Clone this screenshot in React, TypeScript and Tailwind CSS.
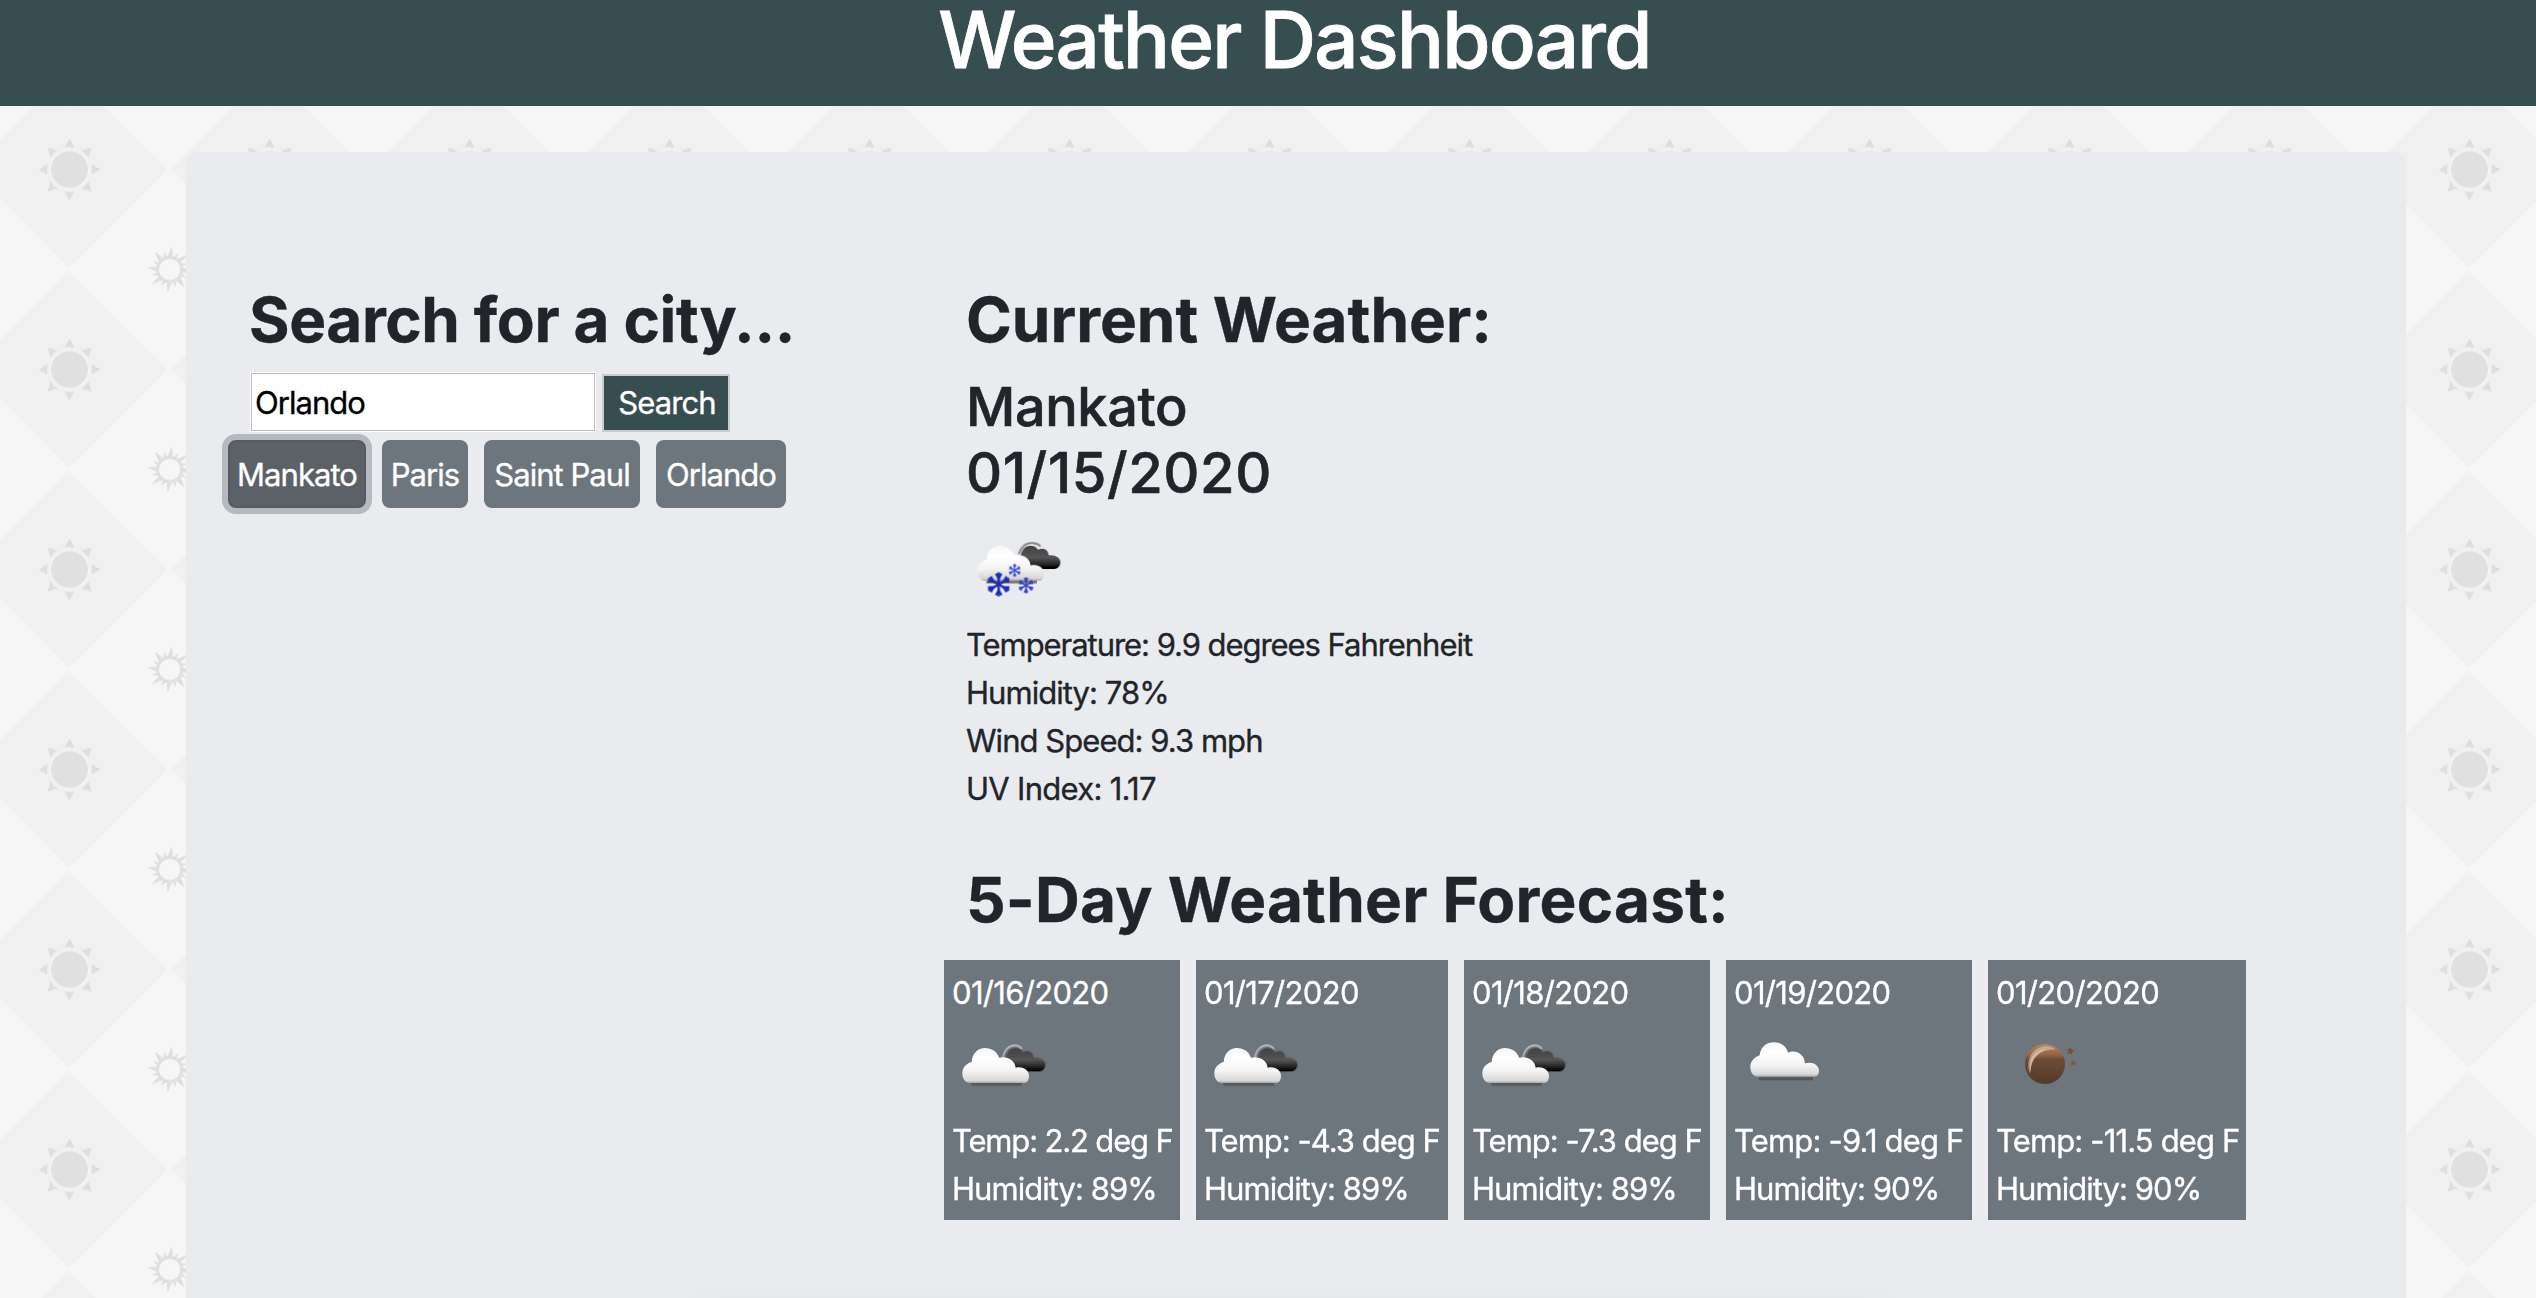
import type { ReactNode } from "react";

type IconKind = "snow" | "broken" | "cloud" | "night";

function PatternBackground() {
  const triangles = [0, 45, 90, 135, 180, 225, 270, 315];
  const corners = [
    [0, 0],
    [200, 0],
    [0, 200],
    [200, 200],
  ];
  return (
    <svg className="absolute inset-0 h-full w-full" aria-hidden="true">
      <defs>
        <g id="ray-sun">
          {triangles.map((a) => (
            <g key={a} transform={`rotate(${a})`}>
              <path d="M-2.6 -12 L-0.4 -17 L1.8 -23 Q3.6 -17 2.2 -12Z" fill="#dedede" />
              <path d="M-2 -12 L1.8 -19 L2 -12Z" fill="#e0e0e0" transform="rotate(22.5)" />
            </g>
          ))}
          <circle r="12" fill="#f6f6f6" stroke="#dfdfdf" strokeWidth="2.8" />
        </g>
        <pattern id="tiles" x="-31" y="69.5" width="200" height="200" patternUnits="userSpaceOnUse">
          <rect width="200" height="200" fill="#f6f6f6" />
          <path d="M100 2 L198.500 100 L100 198.500 L2 100Z" fill="#f0f0f0" />
          <path d="M100 3V197" stroke="#f2f2f2" strokeWidth="2" />
          <g transform="translate(100.500 100)">
            {triangles.map((a) => (
              <path key={a} d="M0 -31 L5 -22 Q0 -23 -5 -22Z" fill="#dedede" transform={`rotate(${a})`} />
            ))}
            <circle r="20" fill="#f3f3f3" />
            <circle r="18.500" fill="#e0e0e0" />
          </g>
          {corners.map(([x, y]) => (
            <use key={`${x}-${y}`} href="#ray-sun" x={x + 0.7} y={y} />
          ))}
        </pattern>
      </defs>
      <rect width="100%" height="100%" fill="url(#tiles)" />
    </svg>
  );
}

function IconGradients() {
  return (
    <svg className="absolute h-0 w-0" aria-hidden="true">
      <defs>
        <linearGradient id="white-cloud" x1="0" y1="0" x2="0" y2="1">
          <stop offset="0" stopColor="#f6f6f6" />
          <stop offset="0.3" stopColor="#ffffff" />
          <stop offset="0.65" stopColor="#f4f4f4" />
          <stop offset="0.93" stopColor="#d8d8d8" />
          <stop offset="1" stopColor="#a8a8a8" />
        </linearGradient>
        <linearGradient id="dark-cloud" x1="0" y1="0" x2="0" y2="1">
          <stop offset="0" stopColor="#414141" />
          <stop offset="0.5" stopColor="#555555" />
          <stop offset="0.75" stopColor="#2a2a2a" />
          <stop offset="0.95" stopColor="#000000" />
        </linearGradient>
        <linearGradient id="planet" x1="0" y1="0" x2="0" y2="1">
          <stop offset="0" stopColor="#b98664" />
          <stop offset="0.28" stopColor="#8f6444" />
          <stop offset="0.38" stopColor="#6d4b35" />
          <stop offset="1" stopColor="#53392a" />
        </linearGradient>
        <filter id="soft" x="-20%" y="-20%" width="140%" height="140%">
          <feGaussianBlur stdDeviation="1.7" />
        </filter>
      </defs>
    </svg>
  );
}

function Flake({ x, y, r, color }: { x: number; y: number; r: number; color: string }) {
  return (
    <g transform={`translate(${x} ${y})`} stroke={color} strokeWidth={r * 0.2} fill="none">
      {[0, 60, 120, 180, 240, 300].map((a) => (
        <g key={a} transform={`rotate(${a})`}>
          <path d={`M0 0V${-r}`} />
          <path d={`M${-r * 0.22} ${-r * 0.9}L0 ${-r * 0.5}L${r * 0.22} ${-r * 0.9}`} />
        </g>
      ))}
    </g>
  );
}

function CloudPair() {
  return (
    <g filter="url(#soft)">
      <path d="M159 80 C160 52 178 38 197 39 C206 40 212 44 216 50" fill="none" stroke="#c9c9c9" strokeWidth="4" />
      <path
        d="M170 118 C164 98 164 76 172 62 C182 42 210 44 219 59 C236 51 250 60 251 76 C272 74 287 84 286 98 C285 110 276 117 264 117Z"
        fill="url(#dark-cloud)"
      />
      <path d="M64 156H216" stroke="#55524f" strokeWidth="8" opacity="0.75" />
      <path
        d="M58 152 C42 150 36 134 37 120 C38 104 50 93 65 89 C67 62 84 47 104 47 C126 47 143 60 147 76 C168 70 195 82 197 106 C220 101 237 114 237 130 C237 143 232 152 222 152Z"
        fill="url(#white-cloud)"
      />
    </g>
  );
}

function WeatherIcon({ kind }: { kind: IconKind }) {
  const art: Record<IconKind, ReactNode> = {
    broken: (
      <g transform="translate(-6 46)">
        <CloudPair />
      </g>
    ),
    snow: (
      <g transform="translate(3 0)">
        <g transform="translate(-6 48)">
          <CloudPair />
          <path
            d="M162 72 C170 48 186 37 206 39 C216 40 223 44 226 50"
            fill="none"
            stroke="#777777"
            strokeWidth="5"
            filter="url(#soft)"
          />
        </g>
        <g filter="url(#soft)">
          <Flake x={95} y={211} r={36} color="#1f2bb8" />
          <Flake x={143} y={169} r={19} color="#3c4fd2" />
          <Flake x={177} y={214} r={24} color="#3341c6" />
        </g>
      </g>
    ),
    cloud: (
      <g transform="translate(3 16)" filter="url(#soft)">
        <path d="M72 169H234" stroke="#55524f" strokeWidth="9" opacity="0.85" />
        <path
          d="M64 163 C51 159 46 146 46 134 C46 118 56 106 74 99 C77 73 95 60 117 60 C139 60 155 74 159 91 C182 81 208 95 210 123 C232 116 252 128 252 145 C252 155 247 163 238 163Z"
          fill="url(#white-cloud)"
        />
      </g>
    ),
    night: (
      <g transform="translate(-783 16)" filter="url(#soft)">
        <circle cx="930" cy="125" r="60" fill="url(#planet)" />
        <path d="M885 155 C869 112 892 76 930 72 C944 71 954 75 962 82 C926 80 888 98 885 155Z" fill="#ecd3c2" opacity="0.5" />
        <path d="M888 150 C876 112 896 84 934 80 C904 90 886 112 888 150Z" fill="#f4e2d6" opacity="0.5" />
        <path d="M1006 73 L1010 82 L1019 84 L1011 89 L1012 97 L1005 92 L997 96 L1000 87 L994 81 L1003 81Z" fill="#7b4f33" />
        <path d="M1015 111 L1018 118 L1025 120 L1019 125 L1019 132 L1013 128 L1006 131 L1009 124 L1004 118 L1012 118Z" fill="#85583b" />
      </g>
    ),
  };
  return (
    <svg className="block h-[100px] w-[100px]" viewBox="0 0 300 300" aria-hidden="true">
      {art[kind]}
    </svg>
  );
}

type Day = { date: string; icon: IconKind; temp: string; humidity: string; width: string; tempSpacing: string };

const days: Day[] = [
  { date: "01/16/2020", icon: "broken", temp: "Temp: 2.2 deg F", humidity: "Humidity: 89%", width: "w-[236px]", tempSpacing: "tracking-[-1.16px]" },
  { date: "01/17/2020", icon: "broken", temp: "Temp: -4.3 deg F", humidity: "Humidity: 89%", width: "w-[252px]", tempSpacing: "tracking-[-1px]" },
  { date: "01/18/2020", icon: "broken", temp: "Temp: -7.3 deg F", humidity: "Humidity: 89%", width: "w-[246px]", tempSpacing: "tracking-[-1px]" },
  { date: "01/19/2020", icon: "cloud", temp: "Temp: -9.1 deg F", humidity: "Humidity: 90%", width: "w-[246px]", tempSpacing: "tracking-[-0.83px]" },
  { date: "01/20/2020", icon: "night", temp: "Temp: -11.5 deg F", humidity: "Humidity: 90%", width: "w-[258px]", tempSpacing: "tracking-[-0.86px]" },
];

const cities = [
  { name: "Mankato", width: "w-[138px]", active: true },
  { name: "Paris", width: "w-[86px]", active: false },
  { name: "Saint Paul", width: "w-[156px]", active: false },
  { name: "Orlando", width: "w-[130px]", active: false },
];

const idleCity = "bg-[#6d757d]";
const activeCity = "bg-[#5c6067] border-2 border-[#545b62] shadow-[0_0_0_6px_#b6b9be]";

export default function App() {
  return (
    <div className="relative flex h-[1298px] w-full flex-col overflow-hidden bg-[#f6f6f6] font-['Inter',sans-serif] text-[31px] leading-[48px] text-[#212529] [-webkit-text-stroke:0.35px]">
      <PatternBackground />
      <IconGradients />

      <header className="relative h-[106px] shrink-0 bg-[#374e50] pl-[53px] text-center text-white">
        <h1 className="whitespace-nowrap text-[78px] font-medium leading-[80px] tracking-[-1.75px] [-webkit-text-stroke:0.8px]">
          Weather Dashboard
        </h1>
      </header>

      <main className="relative mt-[46px] ml-[186px] flex h-[1200px] w-[2220px] shrink-0 items-start rounded-t-[10px] bg-[#eaebef] pt-[129px]">
        <section className="w-[758px] shrink-0 pl-[42px]">
          <h2 className="pl-[21px] text-[62px] font-bold leading-[77px] tracking-[-0.4px] whitespace-nowrap">
            Search for a city...
          </h2>
          <div className="mt-[14px] flex items-start pl-[22px]">
            <div className="flex h-[60px] w-[346px] items-center border border-white bg-white">
              <div className="flex h-full w-full items-center border border-[#bdbdbd] pt-[2px] pl-[3px] tracking-[-0.95px] text-black">
                Orlando
              </div>
            </div>
            <button className="mt-[2px] ml-[6px] flex h-[58px] w-[128px] items-center justify-center border-2 border-[#cbcccc] bg-[#374e50] pl-[2px] tracking-[-0.91px] text-white">
              Search
            </button>
          </div>
          <div className="mt-2 flex gap-4">
            {cities.map((c) => (
              <button
                key={c.name}
                className={`flex h-[68px] items-center justify-center rounded-lg pt-[2px] tracking-[-0.95px] whitespace-nowrap text-white ${c.width} ${c.active ? activeCity : idleCity}`}
              >
                {c.name}
              </button>
            ))}
          </div>
        </section>

        <section>
          <div className="pl-[22px]">
            <h2 className="text-[62px] font-bold leading-[77px]">Current Weather:</h2>
            <h3 className="mt-[15px] text-[54px] font-medium leading-[67px] [-webkit-text-stroke:0.6px]">
              <span className="block tracking-[-0.36px]">Mankato</span>
              <span className="block h-[66px] text-[56px] leading-[66px] tracking-[0.6px]">01/15/2020</span>
            </h3>
            <div className="mt-2 mb-[7px]">
              <WeatherIcon kind="snow" />
            </div>
            <p className="tracking-[-1.05px]">Temperature: 9.9 degrees Fahrenheit</p>
            <p className="tracking-[-0.95px]">Humidity: 78%</p>
            <p className="tracking-[-0.95px]">Wind Speed: 9.3 mph</p>
            <p className="tracking-[-0.71px]">UV Index: 1.17</p>
            <h2 className="mt-12 text-[62px] font-bold leading-[77px] tracking-[0.22px]">5-Day Weather Forecast:</h2>
          </div>
          <div className="mt-[22px] flex gap-4">
            {days.map((d) => (
              <article key={d.date} className={`h-[260px] shrink-0 bg-[#6d757d] pt-[9px] pl-2 whitespace-nowrap text-white ${d.width}`}>
                <p className="tracking-[-0.68px]">{d.date}</p>
                <WeatherIcon kind={d.icon} />
                <p className={d.tempSpacing}>{d.temp}</p>
                <p className="tracking-[-0.95px]">{d.humidity}</p>
              </article>
            ))}
          </div>
        </section>
      </main>

      <div className="absolute top-[1314px] left-[680px] h-10 w-[1220px] shadow-[0_0_50px_rgba(0,0,0,0.05)]" />
    </div>
  );
}
